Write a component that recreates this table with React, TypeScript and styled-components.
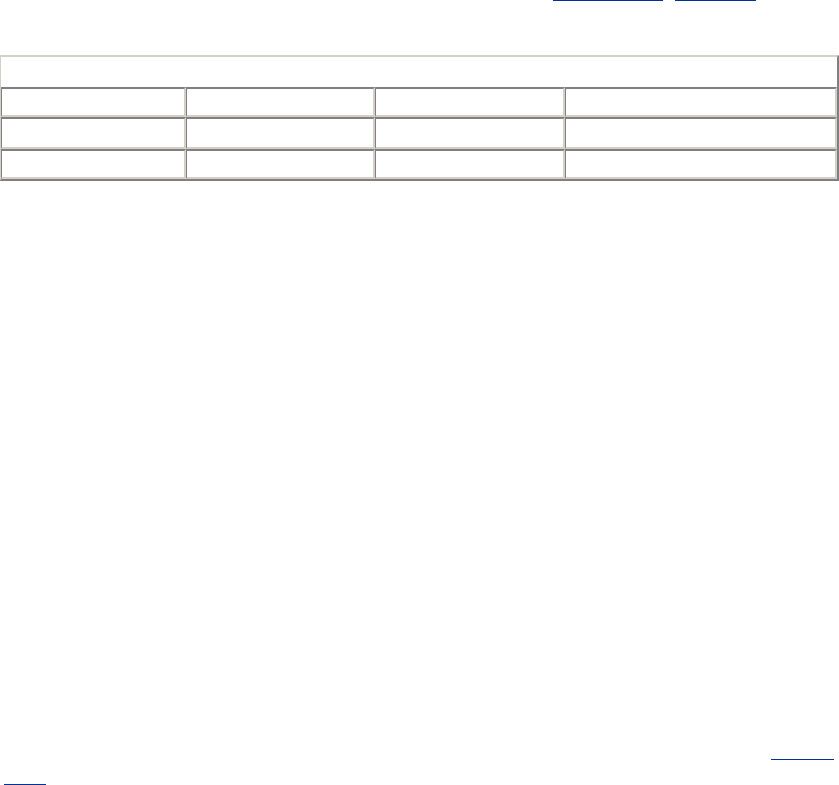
import React from 'react';
import styled, { createGlobalStyle } from 'styled-components';

const GlobalStyle = createGlobalStyle`
  html, body {
    margin: 0;
    padding: 0;
    background: #ffffff;
    font-family: "DejaVu Sans", Verdana, sans-serif;
    font-size: 11px;
    overflow: hidden;
  }
`;

const Page = styled.div`
  width: 839px;
  height: 785px;
  overflow: hidden;
`;

const TopNav = styled.nav`
  height: 55px;
  display: flex;
  justify-content: flex-end;
  align-items: flex-start;
  gap: 12px;
  padding-right: 83px;
`;

const NavLink = styled.a<{ $w: number }>`
  display: block;
  width: ${(p) => p.$w}px;
  height: 11px;
  margin-top: -11px;
  overflow: hidden;
  white-space: nowrap;
  color: #ffffff;
  text-decoration: none;
  border-bottom: 1px solid #003399;
  font-size: 11px;
  line-height: 11px;
`;

const Grid = styled.table`
  width: 839px;
  table-layout: fixed;
  border-collapse: separate;
  border-spacing: 0;
  border-style: solid;
  border-width: 2px 2px 2px 1px;
  border-color: #d4d0c8 #808080 #808080 #d4d0c8;
`;

const TitleCell = styled.td`
  height: 30px;
  padding: 0;
  border: 0;
  font-size: 1px;
  color: #ffffff;
`;

const Cell = styled.td<{ $h: number }>`
  box-sizing: border-box;
  height: ${(p) => p.$h}px;
  padding: 0;
  border-style: solid;
  border-width: 2px 2px 2px 1px;
  border-color: #808080 #d4d0c8 #d4d0c8 #808080;
  font-size: 1px;
  color: #ffffff;
`;

const Footer = styled.footer`
  margin-top: 554px;
`;

const FooterLine = styled.div<{ $end?: boolean }>`
  height: 25px;
  display: flex;
  align-items: flex-end;
  justify-content: ${(p) => (p.$end ? 'flex-end' : 'flex-start')};
  padding: ${(p) => (p.$end ? '0 5px 0 0' : '0 0 0 4px')};
`;

const FooterLink = styled.a<{ $w: number }>`
  display: block;
  width: ${(p) => p.$w}px;
  height: 12px;
  overflow: hidden;
  white-space: nowrap;
  color: #ffffff;
  text-decoration: none;
  border-bottom: 1px solid #003399;
  font-size: 11px;
  line-height: 12px;
`;

const colWidths = [185, 189, 190, 272];
const rowHeights = [30, 32, 30];

export default function App() {
  return (
    <Page>
      <GlobalStyle />
      <TopNav>
        <NavLink href="#" $w={110}>Previous Topic</NavLink>
        <NavLink href="#" $w={81}>Next Topic</NavLink>
      </TopNav>
      <Grid>
        <colgroup>
          {colWidths.map((w, i) => (
            <col key={i} style={{ width: w }} />
          ))}
        </colgroup>
        <tbody>
          <tr>
            <TitleCell colSpan={4}>&nbsp;</TitleCell>
          </tr>
          {rowHeights.map((h, r) => (
            <tr key={r}>
              {colWidths.map((_, c) => (
                <Cell key={c} $h={h}>&nbsp;</Cell>
              ))}
            </tr>
          ))}
        </tbody>
      </Grid>
      <Footer>
        <FooterLine $end>
          <FooterLink href="#" $w={63}>Send</FooterLink>
        </FooterLine>
        <FooterLine>
          <FooterLink href="#" $w={42}>feedback</FooterLink>
        </FooterLine>
      </Footer>
    </Page>
  );
}
